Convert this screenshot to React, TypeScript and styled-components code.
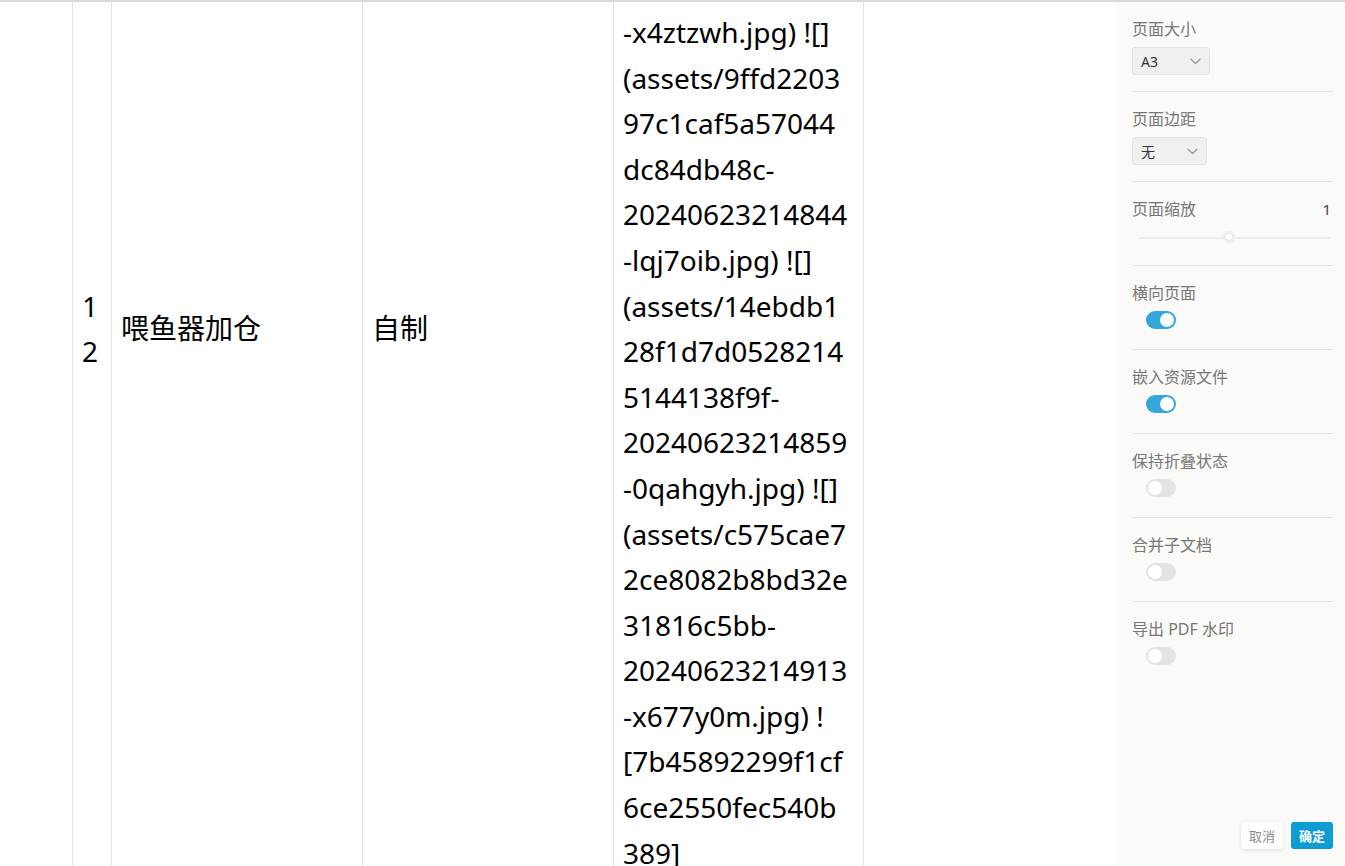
import { createGlobalStyle } from 'styled-components';
import styled from 'styled-components';

const GlobalStyle = createGlobalStyle`
  html, body {
    margin: 0;
    padding: 0;
    height: 100%;
    overflow: hidden;
    background: #ffffff;
  }
  #root {
    height: 100%;
  }
  * {
    box-sizing: border-box;
  }
`;

// the preview is scrolled: the row starts above the visible area
const SCROLL_OFFSET = 228;

const ZOOM_MIN = 0.1;
const ZOOM_MAX = 2;
const zoom = 1;

const assetLines = [
  '![]',
  '(assets/5a1e0b3',
  'c9d24f6a81e07b',
  '2d93cf1a4e7-',
  '20240623214830',
  '-x4ztzwh.jpg) ![]',
  '(assets/9ffd2203',
  '97c1caf5a57044',
  'dc84db48c-',
  '20240623214844',
  '-lqj7oib.jpg) ![]',
  '(assets/14ebdb1',
  '28f1d7d0528214',
  '5144138f9f-',
  '20240623214859',
  '-0qahgyh.jpg) ![]',
  '(assets/c575cae7',
  '2ce8082b8bd32e',
  '31816c5bb-',
  '20240623214913',
  '-x677y0m.jpg) !',
  '[7b45892299f1cf',
  '6ce2550fec540b',
  '389]',
];

type SwitchItem = { label: string; checked: boolean };

const switchItems: SwitchItem[] = [
  { label: '横向页面', checked: true },
  { label: '嵌入资源文件', checked: true },
  { label: '保持折叠状态', checked: false },
  { label: '合并子文档', checked: false },
  { label: '导出 PDF 水印', checked: false },
];

const Chevron = () => (
  <svg width="11" height="7" viewBox="0 0 11 7" fill="none">
    <path d="M1 1.2l4.5 4.3L10 1.2" stroke="#9a9a9a" strokeWidth="1.4" strokeLinecap="round" strokeLinejoin="round" />
  </svg>
);

export default function App() {
  const zoomPercent = ((zoom - ZOOM_MIN) / (ZOOM_MAX - ZOOM_MIN)) * 100;

  return (
    <>
      <GlobalStyle />
      <$Layout>
        <$Preview>
          <$Row>
            <$Cell $width={72} $noBorder />
            <$Cell $width={39}>
              <$Index>12</$Index>
            </$Cell>
            <$Cell $width={251}>喂鱼器加仓</$Cell>
            <$Cell $width={251}>自制</$Cell>
            <$Cell $width={251} $lastCell>
              <div>
                {assetLines.map((line, i) => (
                  <$Line key={i}>{line}</$Line>
                ))}
              </div>
            </$Cell>
          </$Row>
        </$Preview>

        <$Panel>
          <$Section>
            <$Label>页面大小</$Label>
            <$Select $width={78}>
              <span>A3</span>
              <Chevron />
            </$Select>
          </$Section>
          <$Section>
            <$Label>页面边距</$Label>
            <$Select $width={75}>
              <span>无</span>
              <Chevron />
            </$Select>
          </$Section>
          <$Section>
            <$LabelRow>
              <$Label>页面缩放</$Label>
              <$Value>{zoom}</$Value>
            </$LabelRow>
            <$Slider>
              <$Track />
              <$Thumb style={{ left: `calc(${zoomPercent}% - 6px)` }} />
            </$Slider>
          </$Section>
          {switchItems.map((item) => (
            <$Section key={item.label}>
              <$Label>{item.label}</$Label>
              <$SwitchWrap>
                <$Switch $checked={item.checked}>
                  <$Knob />
                </$Switch>
              </$SwitchWrap>
            </$Section>
          ))}

          <$Footer>
            <$CancelButton>取消</$CancelButton>
            <$ConfirmButton>确定</$ConfirmButton>
          </$Footer>
        </$Panel>
      </$Layout>
    </>
  );
}

const $Layout = styled.div`
  display: flex;
  height: 100vh;
  border-top: 2px solid #d7dada;
  font-family: 'Noto Sans', 'Noto Sans CJK SC', sans-serif;
`;

const $Preview = styled.div`
  flex: 1;
  overflow: hidden;
  background: #ffffff;
`;

const $Row = styled.div`
  display: flex;
  align-items: stretch;
  margin-top: -${SCROLL_OFFSET}px;
  color: #000000;
  font-size: 28px;
  line-height: 45.6px;
`;

const $Cell = styled.div<{ $width: number; $noBorder?: boolean; $lastCell?: boolean }>`
  display: flex;
  align-items: center;
  flex-shrink: 0;
  width: ${(p) => p.$width}px;
  padding: 8px 8px 8px 9px;
  border-left: ${(p) => (p.$noBorder ? 'none' : '1px solid #e2e2e2')};
  border-right: ${(p) => (p.$lastCell ? '1px solid #e2e2e2' : 'none')};
`;

const $Index = styled.div`
  word-break: break-all;
`;

const $Line = styled.div`
  white-space: nowrap;
`;

const $Panel = styled.div`
  display: flex;
  flex-direction: column;
  width: 228px;
  flex-shrink: 0;
  padding: 0 12px 0 15px;
  background: #fafaf9;
`;

const $Section = styled.div`
  padding: 17px 0 16px;
  border-bottom: 1px solid #e6e6e6;

  &:nth-last-of-type(2) {
    border-bottom: none;
  }
`;

const $Label = styled.div`
  font-size: 16px;
  line-height: 20px;
  color: #777777;
`;

const $LabelRow = styled.div`
  display: flex;
  justify-content: space-between;
  align-items: center;
  padding-right: 2px;
`;

const $Value = styled.div`
  font-size: 15px;
  line-height: 20px;
  color: #444444;
`;

const $Select = styled.div<{ $width: number }>`
  display: flex;
  align-items: center;
  justify-content: space-between;
  width: ${(p) => p.$width}px;
  height: 28px;
  margin-top: 8px;
  padding: 0 8px 0 8px;
  background: #f0f0f0;
  border: 1px solid #e4e4e4;
  border-radius: 3px;
  font-size: 14px;
  color: #333333;
`;

const $Slider = styled.div`
  position: relative;
  height: 22px;
  margin: 8px 2px 0 6px;
  display: flex;
  align-items: center;
`;

const $Track = styled.div`
  width: 100%;
  height: 2px;
  background: #ececec;
  border-radius: 1px;
`;

const $Thumb = styled.div`
  position: absolute;
  top: 4px;
  width: 12px;
  height: 12px;
  border-radius: 50%;
  background: #ffffff;
  border: 3px solid #ececec;
`;

const $SwitchWrap = styled.div`
  display: flex;
  align-items: center;
  height: 18px;
  margin: 8px 0 4px;
  padding-left: 14px;
`;

const $Switch = styled.div<{ $checked: boolean }>`
  display: flex;
  align-items: center;
  justify-content: ${(p) => (p.$checked ? 'flex-end' : 'flex-start')};
  width: 30px;
  height: 18px;
  padding: 2px;
  border-radius: 9px;
  background: ${(p) => (p.$checked ? '#33a6dc' : '#e3e3e3')};
`;

const $Knob = styled.div`
  width: 14px;
  height: 14px;
  border-radius: 50%;
  background: #ffffff;
`;

const $Footer = styled.div`
  margin-top: auto;
  display: flex;
  justify-content: flex-end;
  gap: 8px;
  padding-bottom: 17px;
`;

const $ButtonBase = styled.button`
  height: 27px;
  padding: 0 8px;
  border: none;
  border-radius: 3px;
  font-family: 'Noto Sans', 'Noto Sans CJK SC', sans-serif;
  font-size: 13px;
  cursor: pointer;
`;

const $CancelButton = styled($ButtonBase)`
  background: #ffffff;
  color: #8a8a8a;
  box-shadow: 0 1px 4px rgba(0, 0, 0, 0.12);
`;

const $ConfirmButton = styled($ButtonBase)`
  background: #0e9dd3;
  color: #ffffff;
  font-weight: 700;
`;
